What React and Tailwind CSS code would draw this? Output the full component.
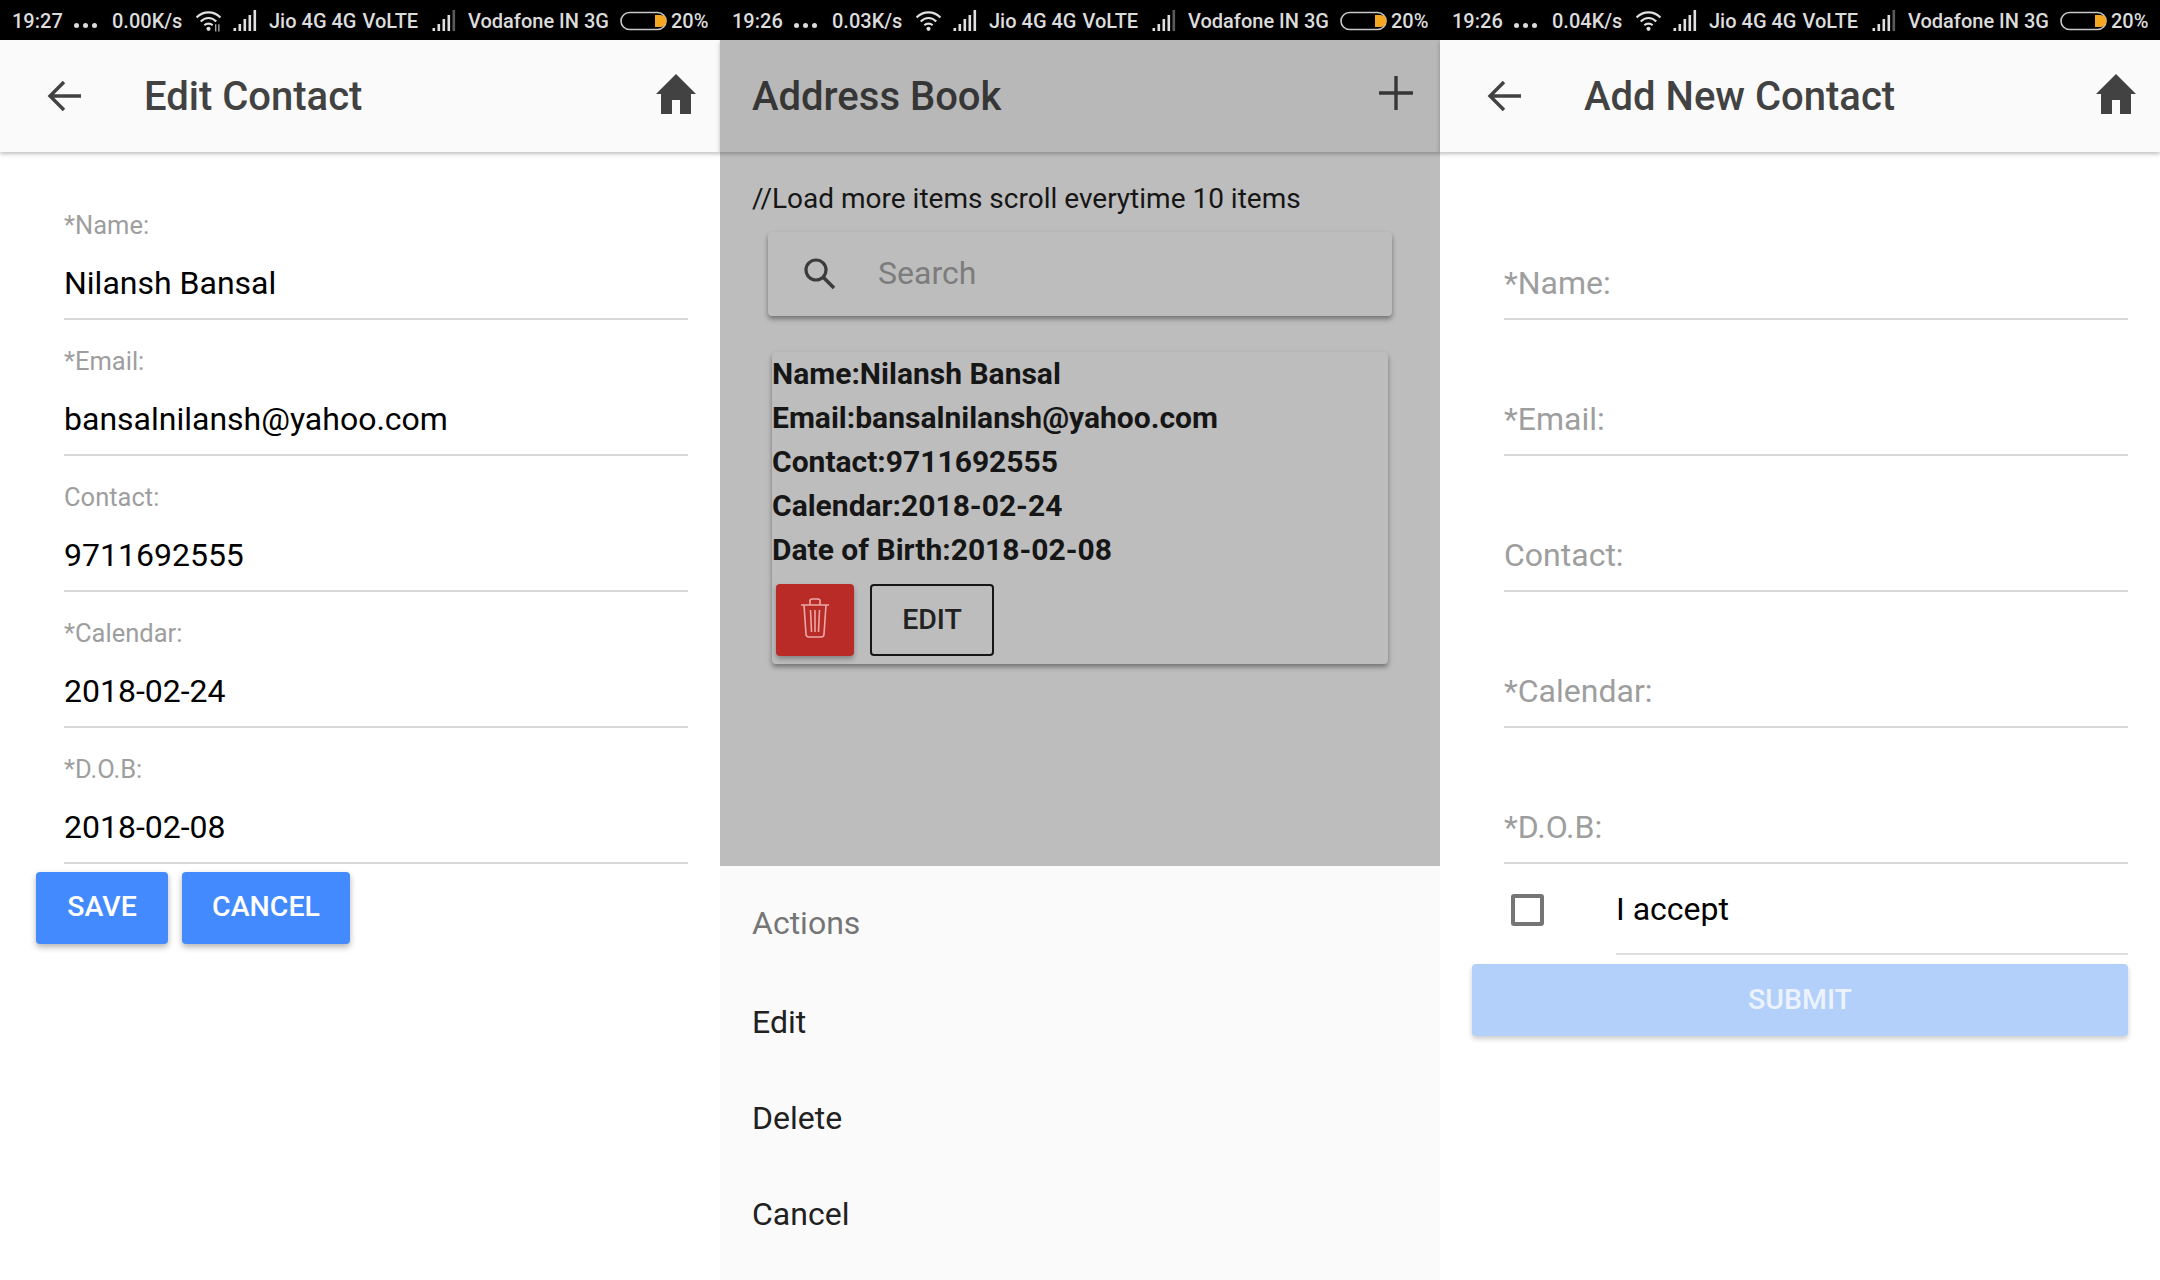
import React from "react";

const font = { fontFamily: "Roboto, sans-serif" };

function Wifi({ small }) {
  return (
    <svg width="27" height="24" viewBox="0 0 26 22" fill="none" stroke="#e0e0e0" strokeWidth="2">
      <path d="M1.500 8.500C8 2 18 2 24.500 8.500" />
      <path d="M5.500 12.500C10 8 16 8 20.500 12.500" />
      <path d="M9 16C11.200 14 14.800 14 17 16" />
      <circle cx="13" cy="19.500" r="2" fill="#e0e0e0" stroke="none" />
      {small && <path d="M20 15v7M23 15v7" strokeWidth="1" />}
    </svg>
  );
}

function Signal({ weak }) {
  const bars = [
    [1, 19, 3],
    [6, 15, 7],
    [11, 10, 12],
    [16, 6, 16],
    [21, 1, 21],
  ];
  return (
    <svg width="26" height="22" viewBox="0 0 25 22" fill="#e0e0e0">
      {bars.map(([x, y, h], i) => (
        <rect key={i} x={x} y={y} width="2.600" height={h} opacity={weak && i === 4 ? 0.4 : 1} />
      ))}
    </svg>
  );
}

function Battery() {
  return (
    <svg width="48" height="20" viewBox="0 0 48 20" fill="none">
      <rect x="1" y="1.500" width="45" height="17" rx="8.500" stroke="#c8c8c8" strokeWidth="1.600" />
      <path d="M35 4h5.500a6 6 0 0 1 0 12H35z" fill="#f5a623" />
    </svg>
  );
}

function StatusBar({ time, speed, wifiSmall }) {
  return (
    <div className="h-10 bg-black flex items-center pl-3 pt-[2px] text-[20px] font-medium text-[#dcdcdc] whitespace-nowrap">
      <span className="w-[62px]">{time}</span>
      <span className="w-[38px] flex gap-[4px] mt-[8px]">
        <i className="w-[5px] h-[5px] rounded-full bg-[#dcdcdc]" />
        <i className="w-[5px] h-[5px] rounded-full bg-[#dcdcdc]" />
        <i className="w-[5px] h-[5px] rounded-full bg-[#dcdcdc]" />
      </span>
      <span className="w-[83px]">{speed}</span>
      <span className="w-[37px] flex -mt-[3px]"><Wifi small={wifiSmall} /></span>
      <span className="w-[37px] flex -mt-[3px]"><Signal /></span>
      <span className="w-[162px]">Jio 4G 4G <span className="ml-[1px]">VoLTE</span></span>
      <span className="w-[37px] flex -mt-[3px]"><Signal weak /></span>
      <span className="w-[152px]">Vodafone IN 3G</span>
      <span className="w-[51px] flex"><Battery /></span>
      <span>20%</span>
    </div>
  );
}

function BackIcon() {
  return (
    <svg width="34" height="32" viewBox="0 0 34 32" fill="none" stroke="#424242" strokeWidth="3.400">
      <path d="M34 16H3M17 2 3 16l14 14" />
    </svg>
  );
}

function HomeIcon() {
  return (
    <svg className="-mt-[4px]" width="40" height="40" viewBox="0 0 40 40" fill="#424242">
      <path d="M20 0 0 20h5v20h11V26h8v14h11V20h5z" />
    </svg>
  );
}

function Header({ title }) {
  return (
    <div className="h-[112px] bg-[#fafafa] shadow-[0_2px_4px_rgba(0,0,0,0.25)] flex items-center pl-[47px] pr-6 relative">
      <BackIcon />
      <div className="ml-[63px] pt-[2px] text-[40px] font-medium text-[#424242] flex-1">{title}</div>
      <HomeIcon />
    </div>
  );
}

function Field({ label, value }) {
  return (
    <div className="h-[136px] border-b-2 border-[#d9d9d9] pt-[27px]">
      <div className="h-[28px] leading-[28px] text-[25.500px] text-[#9e9e9e]">{value ? label : ""}</div>
      <div className={`mt-[15px] h-[58px] leading-[58px] text-[32px] ${value ? "text-black" : "text-[#9e9e9e]"}`}>
        {value || label}
      </div>
    </div>
  );
}

function EditContact() {
  const rows = [
    ["*Name:", "Nilansh Bansal"],
    ["*Email:", "bansalnilansh@yahoo.com"],
    ["Contact:", "9711692555"],
    ["*Calendar:", "2018-02-24"],
    ["*D.O.B:", "2018-02-08"],
  ];
  return (
    <div className="bg-white h-full">
      <StatusBar time="19:27" speed="0.00K/s" wifiSmall />
      <Header title="Edit Contact" />
      <div className="pt-[32px] pl-[64px] pr-[32px]">
        {rows.map(([l, v]) => (
          <Field key={l} label={l} value={v} />
        ))}
      </div>
      <div className="flex gap-[14px] pl-[36px] mt-[8px]">
        <button className="w-[132px] h-[72px] pb-[2px] rounded bg-[#448aff] text-white text-[28.500px] font-medium shadow-[0_3px_6px_rgba(0,0,0,0.3)]">SAVE</button>
        <button className="w-[168px] h-[72px] pb-[2px] rounded bg-[#448aff] text-white text-[28.500px] font-medium shadow-[0_3px_6px_rgba(0,0,0,0.3)]">CANCEL</button>
      </div>
    </div>
  );
}

function TrashIcon() {
  return (
    <svg className="-mt-[4px]" width="30" height="40" viewBox="0 0 30 40" fill="none" stroke="#eaa9a6" strokeWidth="1.600">
      <path d="M1 7h28M10 7V3q0-2 2-2h6q2 0 2 2v4M4 7l2 29q0 3 3 3h12q3 0 3-3l2-29M10.500 12l1 22M15 12v22M19.500 12l-1 22" />
    </svg>
  );
}

function AddressBook() {
  const lines = [
    "Name:Nilansh Bansal",
    "Email:bansalnilansh@yahoo.com",
    "Contact:9711692555",
    "Calendar:2018-02-24",
    "Date of Birth:2018-02-08",
  ];
  return (
    <div className="h-full bg-[#fafafa] flex flex-col">
      <StatusBar time="19:26" speed="0.03K/s" />
      <div className="h-[112px] bg-[#b8b8b8] shadow-[0_2px_4px_rgba(0,0,0,0.25)] flex items-center pl-8 pr-[27px] relative">
        <div className="flex-1 pt-[2px] text-[40px] font-medium text-[#363636]">Address Book</div>
        <svg className="-mt-[6px]" width="34" height="34" viewBox="0 0 34 34" fill="none" stroke="#363636" strokeWidth="3.400">
          <path d="M17 0v34M0 17h34" />
        </svg>
      </div>
      <div className="h-[714px] bg-[#bdbdbd]">
        <div className="pl-8 h-[80px] pt-[29px] leading-[36px] text-[28px] text-[#161616]">//Load more items scroll everytime 10 items</div>
        <div className="ml-[48px] w-[624px] h-[84px] rounded bg-[#bdbdbd] shadow-[0_3px_5px_rgba(0,0,0,0.4)] flex items-center pl-[35px]">
          <svg width="34" height="34" viewBox="0 0 34 34" fill="none" stroke="#3c3c3c" strokeWidth="3.200">
            <circle cx="13" cy="13" r="10" />
            <path d="m20 20 11 11" strokeWidth="3.600" />
          </svg>
          <span className="ml-[41px] -mt-[2px] text-[32px] text-[#7c7c7c]">Search</span>
        </div>
        <div className="ml-[52px] mt-[36px] w-[616px] h-[312px] rounded-sm bg-[#bdbdbd] shadow-[0_3px_5px_rgba(0,0,0,0.4)]">
          {lines.map((t) => (
            <div key={t} className="h-[44px] leading-[44px] text-[30px] font-bold text-[#161616] whitespace-nowrap">{t}</div>
          ))}
          <div className="flex items-center gap-4 pl-1 mt-[12px]">
            <button className="w-[78px] h-[72px] rounded bg-[#b92b27] shadow-[0_3px_5px_rgba(0,0,0,0.3)] flex items-center justify-center">
              <TrashIcon />
            </button>
            <button className="w-[124px] h-[72px] rounded border-2 border-[#161616] text-[28.500px] font-medium text-[#222]">EDIT</button>
          </div>
        </div>
      </div>
      <div className="pl-8 flex-1">
        <div className="h-[108px] pt-[6px] flex items-center text-[32px] text-[#757575]">Actions</div>
        {["Edit", "Delete", "Cancel"].map((t) => (
          <div key={t} className="h-[96px] flex items-center text-[32px] text-[#212121]">{t}</div>
        ))}
      </div>
    </div>
  );
}

function AddContact() {
  const rows = ["*Name:", "*Email:", "Contact:", "*Calendar:", "*D.O.B:"];
  return (
    <div className="bg-white h-full">
      <StatusBar time="19:26" speed="0.04K/s" />
      <Header title="Add New Contact" />
      <div className="pt-[32px] pl-[64px] pr-[32px]">
        {rows.map((l) => (
          <Field key={l} label={l} />
        ))}
      </div>
      <div className="flex pl-[71px] pr-[32px]">
        <div className="w-[33px] h-[32px] mt-[30px] rounded-[3px] border-4 border-[#757575]" />
        <div className="flex-1 ml-[72px] h-[91px] border-b-2 border-[#dedede] pt-[22px] leading-[46px] text-[32px] text-black">I accept</div>
      </div>
      <div className="pl-[32px] pr-[32px] mt-[9px]">
        <button className="w-full h-[72px] rounded bg-[#b3d0fa] text-[#ecf3fe] text-[28.500px] font-medium shadow-[0_3px_5px_rgba(0,0,0,0.2)]">SUBMIT</button>
      </div>
    </div>
  );
}

export default function App() {
  return (
    <div className="grid grid-cols-3 h-[1280px] w-[2160px] overflow-hidden" style={font}>
      <EditContact />
      <AddressBook />
      <AddContact />
    </div>
  );
}
